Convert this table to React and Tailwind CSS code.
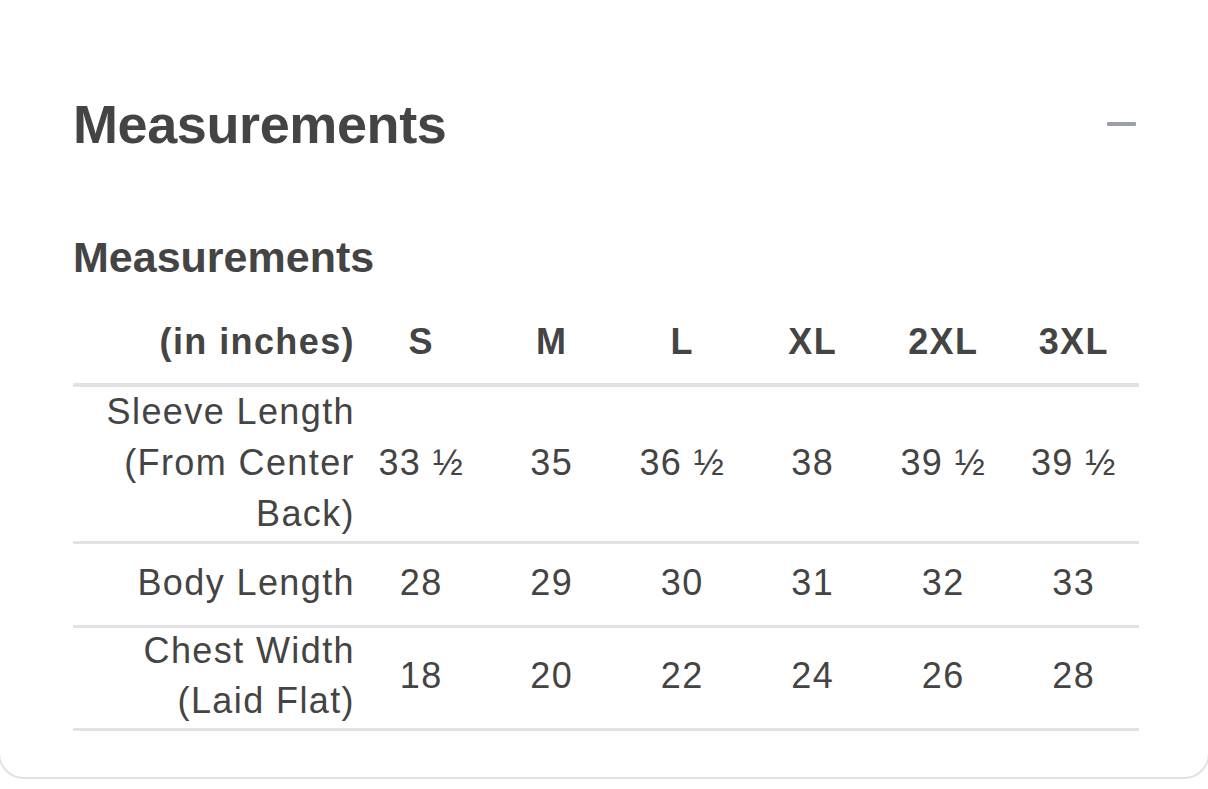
const sizes = ['S', 'M', 'L', 'XL', '2XL', '3XL']

const rows = [
  { label: ['Sleeve Length', '(From Center', 'Back)'], values: ['33 ½', '35', '36 ½', '38', '39 ½', '39 ½'], h: 'h-[154px]', lead: 'leading-[51px]' },
  { label: ['Body Length'], values: ['28', '29', '30', '31', '32', '33'], h: 'h-[81px]', lead: 'leading-[51px]' },
  { label: ['Chest Width', '(Laid Flat)'], values: ['18', '20', '22', '24', '26', '28'], h: 'h-[100px]', lead: 'leading-[50px]' },
]

export default function App() {
  return (
    <div className="min-h-screen bg-white overflow-hidden" style={{ fontFamily: '"Liberation Sans", Arial, sans-serif' }}>
      <div className="-mx-[2px] border-2 border-t-0 border-[#e1e1e5] rounded-b-[26px] bg-white pl-[73px] pr-[69px] pt-[93px] pb-[46px] text-[#444444]">
        {/* Accordion header */}
        <div className="flex items-center justify-between h-[62px]">
          <h2 className="text-[54px] font-bold leading-[62px] tracking-[-0.4px]">Measurements</h2>
          <span className="block w-[29px] h-[4px] mr-[3px] bg-[#9a9ead] rounded-[1px]" />
        </div>

        <h3 className="mt-[77px] text-[43px] font-bold leading-[50px]">Measurements</h3>

        {/* Size table */}
        <div className="mt-[18px] text-[36px] tracking-[1.4px]">
          <div className="grid grid-cols-[283px_repeat(6,1fr)] h-[87px] items-center font-bold leading-[51px] border-b-4 border-[#e2e2e4]">
            <div className="text-right pr-px">(in inches)</div>
            {sizes.map((s) => (
              <div key={s} className="text-center">{s}</div>
            ))}
          </div>
          {rows.map((r, i) => (
            <div
              key={i}
              className={`grid grid-cols-[283px_repeat(6,1fr)] items-center border-b-[3px] border-[#e2e2e4] box-content ${r.h} ${r.lead}`}
            >
              <div className="text-right pr-px -translate-y-[2px]">
                {r.label.map((l) => (
                  <div key={l}>{l}</div>
                ))}
              </div>
              {r.values.map((v, j) => (
                <div key={j} className="text-center -translate-y-[2px]">{v}</div>
              ))}
            </div>
          ))}
        </div>
      </div>
    </div>
  )
}
